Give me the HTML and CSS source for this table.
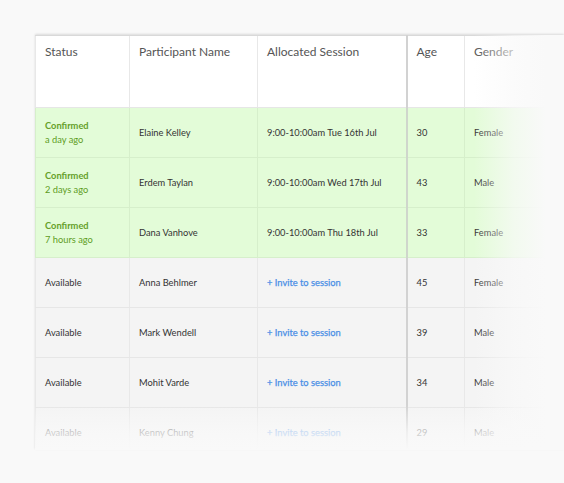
FILE: index.html
```html
<!DOCTYPE html>
<html>
<head>
<meta charset="utf-8">
<link rel="stylesheet" href="styles.css">
</head>
<body>
<div class="stage">
  <div class="frame">
    <table class="grid">
      <thead>
        <tr>
          <th class="c-status">Status</th>
          <th class="c-name">Participant Name</th>
          <th class="c-session">Allocated Session</th>
          <th class="c-age">Age</th>
          <th class="c-gender">Gender</th>
        </tr>
      </thead>
      <tbody>
        <tr class="confirmed">
          <td><span class="st">Confirmed</span><span class="ago">a day ago</span></td>
          <td>Elaine Kelley</td>
          <td>9:00-10:00am Tue 16th Jul</td>
          <td class="c-age">30</td>
          <td class="muted">Female</td>
        </tr>
        <tr class="confirmed">
          <td><span class="st">Confirmed</span><span class="ago">2 days ago</span></td>
          <td>Erdem Taylan</td>
          <td>9:00-10:00am Wed 17th Jul</td>
          <td class="c-age">43</td>
          <td class="muted">Male</td>
        </tr>
        <tr class="confirmed">
          <td><span class="st">Confirmed</span><span class="ago">7 hours ago</span></td>
          <td>Dana Vanhove</td>
          <td>9:00-10:00am Thu 18th Jul</td>
          <td class="c-age">33</td>
          <td class="muted">Female</td>
        </tr>
        <tr class="avail">
          <td class="av">Available</td>
          <td>Anna Behlmer</td>
          <td><span class="invite">+ Invite to session</span></td>
          <td class="c-age">45</td>
          <td class="muted">Female</td>
        </tr>
        <tr class="avail">
          <td class="av">Available</td>
          <td>Mark Wendell</td>
          <td><span class="invite">+ Invite to session</span></td>
          <td class="c-age">39</td>
          <td class="muted">Male</td>
        </tr>
        <tr class="avail">
          <td class="av">Available</td>
          <td>Mohit Varde</td>
          <td><span class="invite">+ Invite to session</span></td>
          <td class="c-age">34</td>
          <td class="muted">Male</td>
        </tr>
        <tr class="avail">
          <td class="av">Available</td>
          <td>Kenny Chung</td>
          <td><span class="invite">+ Invite to session</span></td>
          <td class="c-age">29</td>
          <td class="muted">Male</td>
        </tr>
      </tbody>
    </table>
    <div class="fade-right"></div>
    <div class="fade-bottom"></div>
  </div>
</div>
</body>
</html>
```

FILE: styles.css
```css
html, body {
  margin: 0;
  padding: 0;
  background: #f9f9f9;
  font-family: Lato, "Liberation Sans", sans-serif;
  color: #444;
}

.stage {
  width: 564px;
  height: 483px;
  overflow: hidden;
  padding: 35px 0 0 35px;
  box-sizing: border-box;
}

.frame {
  position: relative;
  width: 529px;
  height: 415px;
  overflow: hidden;
  box-shadow: 0 -1px 2px rgba(0,0,0,0.12);
}

.grid {
  border-collapse: collapse;
  table-layout: fixed;
  width: 540px;
}

.grid th,
.grid td {
  border-left: 1px solid #e8e8e8;
  border-bottom: 1px solid #e6e6e6;
  text-align: left;
  padding: 0 0 0 9px;
  white-space: nowrap;
  overflow: hidden;
}

.grid th {
  background: #ffffff;
  height: 72px;
  vertical-align: top;
  padding-top: 8px;
  font-size: 12px;
  font-weight: 400;
  color: #555;
  box-sizing: border-box;
  border-top: 1px solid #d9d9d9;
}

.grid td {
  height: 49px;
  font-size: 9.3px;
  color: #333;
  vertical-align: middle;
}

.c-status { width: 94px; }
.c-name { width: 128px; }
.c-session { width: 149px; }
.c-age { width: 58px; }
.c-gender { width: 111px; }

.grid th.c-age,
.grid td.c-age {
  border-left: 2px solid #d2d2d2;
}

.confirmed td {
  background: #e3fcd8;
  border-bottom-color: #d6efcb;
  border-left-color: #d6efcb;
}

.confirmed td.c-age { border-left-color: #cfd6cc; }

.st {
  display: block;
  color: #66a02a;
  font-weight: 700;
  font-size: 9.3px;
  line-height: 14px;
}

.ago {
  display: block;
  color: #5e9c1e;
  font-size: 9.3px;
  line-height: 14px;
}

.avail td {
  background: #f4f4f4;
}

.av {
  color: #444;
}

.invite {
  color: #4a8fe6;
  font-weight: 400;
  -webkit-text-stroke: 0.25px #4a8fe6;
}

.muted {
  color: #666;
}

.fade-right {
  position: absolute;
  top: 0;
  right: 0;
  width: 90px;
  height: 100%;
  background: linear-gradient(to right, rgba(249,249,249,0) 0%, rgba(249,249,249,0.7) 45%, #f9f9f9 80%);
}

.fade-bottom {
  position: absolute;
  left: 0;
  bottom: 0;
  width: 100%;
  height: 45px;
  background: linear-gradient(to bottom, rgba(249,249,249,0) 0%, rgba(249,249,249,0.75) 60%, #f9f9f9 100%);
}
```
